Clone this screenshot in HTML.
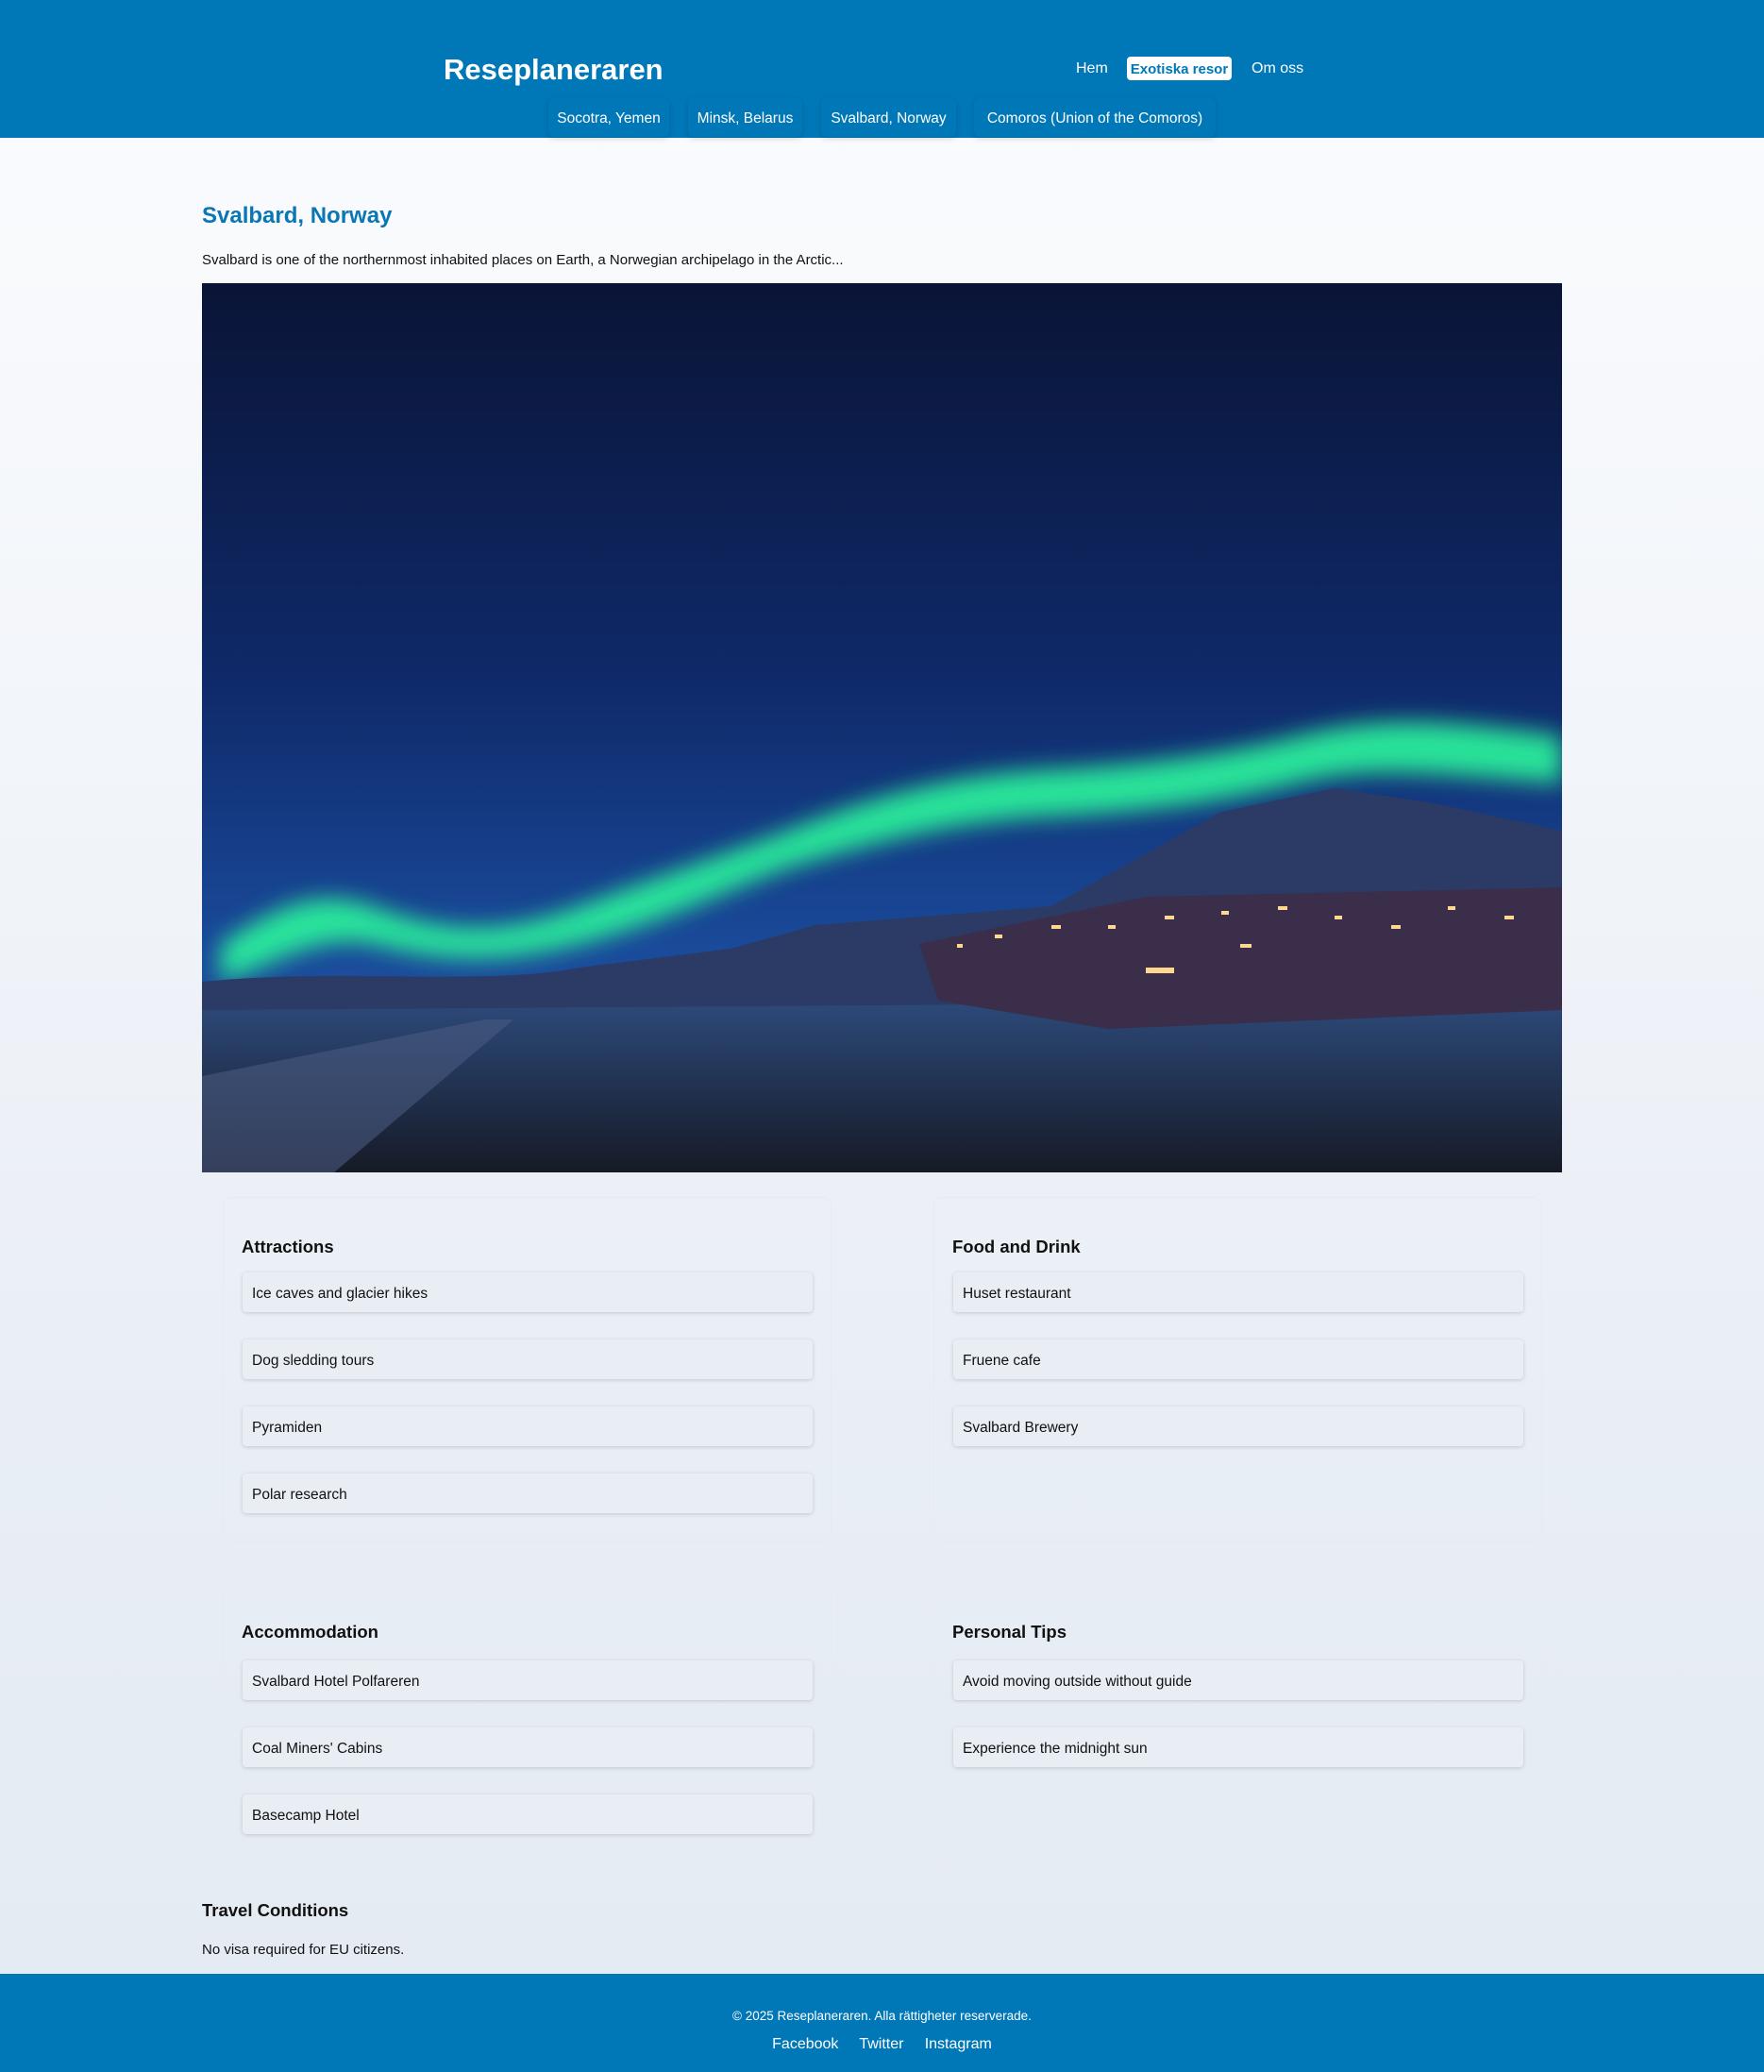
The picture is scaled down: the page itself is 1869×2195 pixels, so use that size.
<!DOCTYPE html>
<html><head><meta charset="utf-8"><style>
*{margin:0;padding:0;box-sizing:border-box}
body{width:1869px;height:2195px;position:relative;font-family:"Liberation Sans",sans-serif;background:linear-gradient(#fbfcfe 0px,#f3f6fa 700px,#e9eef5 1500px,#e4ebf3 2090px);overflow:hidden;color:#111}
.a{position:absolute;white-space:nowrap}
header{position:absolute;left:0;top:0;width:1869px;height:146px;background:#0077b6}
.sub{position:absolute;top:104px;height:41px;border-radius:6px;box-shadow:0 2px 6px rgba(0,0,0,.15);color:#fff;font-size:15.5px;line-height:43px;text-align:center;background:#0077b6}
.card{position:absolute;width:645px;border:1px solid #e6ebf1;border-radius:8px}
.card h3{position:absolute;left:19px;top:41px;font-size:18.5px;font-weight:bold}
.it{position:absolute;left:20px;width:604px;height:42px;background:#e9eef5;border-radius:4px;box-shadow:0 1px 4px rgba(0,0,0,.16);font-size:15.5px;line-height:45px;padding-left:10px}
footer{position:absolute;left:0;top:2091px;width:1869px;height:104px;background:#0077b6;color:#fff;text-align:center}
</style></head><body>
<header>
<div class="a" style="left:470px;top:56px;font-size:31px;font-weight:bold;color:#fff">Reseplaneraren</div>
<div class="a" style="left:1140px;top:64px;font-size:16px;color:#fff">Hem</div>
<div class="a" style="left:1194px;top:60px;width:111px;height:25px;background:#fff;border-radius:4px;color:#0077b6;font-weight:bold;font-size:15px;line-height:27px;text-align:center">Exotiska resor</div>
<div class="a" style="left:1326px;top:64px;font-size:16px;color:#fff">Om oss</div>
<div class="sub" style="left:581px;width:128px">Socotra, Yemen</div>
<div class="sub" style="left:729px;width:121px">Minsk, Belarus</div>
<div class="sub" style="left:870px;width:143px">Svalbard, Norway</div>
<div class="sub" style="left:1032px;width:256px">Comoros (Union of the Comoros)</div>
</header>
<div class="a" style="left:214px;top:215px;font-size:24px;font-weight:bold;color:#0a77b3">Svalbard, Norway</div>
<div class="a" style="left:214px;top:267px;font-size:15px">Svalbard is one of the northernmost inhabited places on Earth, a Norwegian archipelago in the Arctic...</div>
<svg class="a" style="left:214px;top:300px" width="1441" height="942" viewBox="0 0 1441 942">
<defs>
<linearGradient id="sky" x1="0" y1="0" x2="0" y2="1"><stop offset="0" stop-color="#0a1436"/><stop offset=".45" stop-color="#0f2a6a"/><stop offset=".75" stop-color="#1a4a9a"/><stop offset="1" stop-color="#2a5aa0"/></linearGradient>
<linearGradient id="gr" x1="0" y1="0" x2="0" y2="1"><stop offset="0" stop-color="#2d4a7a"/><stop offset="1" stop-color="#161a26"/></linearGradient>
<filter id="bl"><feGaussianBlur stdDeviation="12"/></filter>
</defs>
<rect width="1441" height="942" fill="url(#sky)"/>
<path d="M20 700 C80 660 120 640 180 660 C260 690 320 690 400 660 C480 630 540 610 620 580 C720 540 800 520 900 515 C1000 510 1080 500 1160 480 C1240 460 1300 460 1441 480 L1441 530 C1300 520 1240 510 1160 530 C1080 550 1000 560 900 565 C800 570 720 590 620 620 C540 650 480 680 400 700 C320 720 260 720 180 700 C120 690 80 720 20 740Z" fill="#2af59c" opacity=".9" filter="url(#bl)"/>
<path d="M0 740 C150 725 300 745 400 725 L560 705 L650 680 L900 660 L1080 560 L1200 535 L1300 550 L1441 580 L1441 942 L0 942Z" fill="#2b3b66"/>
<path d="M0 770 L1441 760 L1441 942 L0 942Z" fill="url(#gr)"/>
<path d="M760 700 L1000 650 L1441 640 L1441 770 L960 790 L780 760Z" fill="#3a2e4a"/>
<g fill="#ffd890">
<rect x="800" y="700" width="6" height="4"/><rect x="840" y="690" width="8" height="4"/><rect x="900" y="680" width="10" height="4"/><rect x="960" y="680" width="8" height="4"/><rect x="1020" y="670" width="10" height="4"/><rect x="1080" y="665" width="8" height="4"/><rect x="1140" y="660" width="10" height="4"/><rect x="1200" y="670" width="8" height="4"/><rect x="1260" y="680" width="10" height="4"/><rect x="1320" y="660" width="8" height="4"/><rect x="1380" y="670" width="10" height="4"/><rect x="1000" y="725" width="30" height="6"/><rect x="1100" y="700" width="12" height="4"/>
</g>
<path d="M0 840 L300 780 L330 780 L140 942 L0 942Z" fill="#4a5a80" opacity=".6"/>
</svg>
<div class="card" style="left:236px;top:1268px;height:365px"><h3>Attractions</h3>
<div class="it" style="top:79px">Ice caves and glacier hikes</div>
<div class="it" style="top:150px">Dog sledding tours</div>
<div class="it" style="top:221px">Pyramiden</div>
<div class="it" style="top:292px">Polar research</div></div>
<div class="card" style="left:989px;top:1268px;height:365px"><h3>Food and Drink</h3>
<div class="it" style="top:79px">Huset restaurant</div>
<div class="it" style="top:150px">Fruene cafe</div>
<div class="it" style="top:221px">Svalbard Brewery</div></div>
<div class="card" style="left:236px;top:1676px;height:297px"><h3>Accommodation</h3>
<div class="it" style="top:82px">Svalbard Hotel Polfareren</div>
<div class="it" style="top:153px">Coal Miners' Cabins</div>
<div class="it" style="top:224px">Basecamp Hotel</div></div>
<div class="card" style="left:989px;top:1676px;height:297px"><h3>Personal Tips</h3>
<div class="it" style="top:82px">Avoid moving outside without guide</div>
<div class="it" style="top:153px">Experience the midnight sun</div></div>
<div class="a" style="left:214px;top:2013px;font-size:18.5px;font-weight:bold">Travel Conditions</div>
<div class="a" style="left:214px;top:2057px;font-size:15px">No visa required for EU citizens.</div>
<footer>
<div class="a" style="left:0;width:1869px;top:37px;font-size:13.5px">© 2025 Reseplaneraren. Alla rättigheter reserverade.</div>
<div class="a" style="left:0;width:1869px;top:66px;font-size:16px">Facebook &nbsp;&nbsp;&nbsp; Twitter &nbsp;&nbsp;&nbsp; Instagram</div>
</footer>
</body></html>
